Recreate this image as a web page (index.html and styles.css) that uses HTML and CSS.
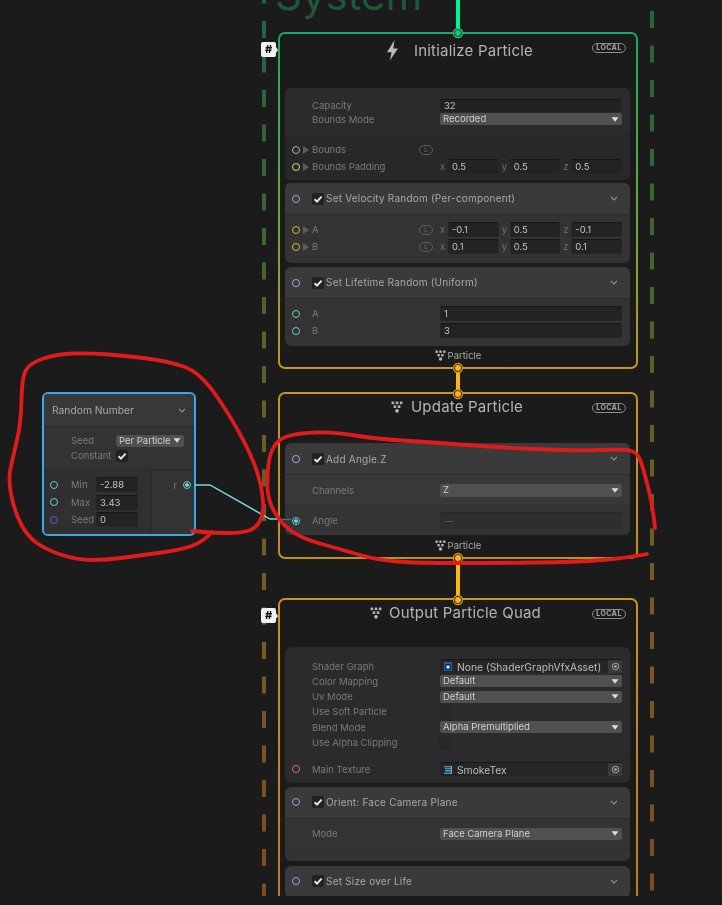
FILE: index.html
```html
<!DOCTYPE html>
<html lang="en">
<head>
<meta charset="utf-8">
<title>VFX Graph</title>
<link rel="stylesheet" href="styles.css">
</head>
<body>
<svg class="defs" width="0" height="0" aria-hidden="true">
  <symbol id="dots" viewBox="0 0 11 11">
    <rect x="0.5" y="0.5" width="2.4" height="2.4"/><rect x="4.3" y="0.5" width="2.4" height="2.4"/><rect x="8.1" y="0.5" width="2.4" height="2.4"/>
    <rect x="2.4" y="4" width="2.4" height="2.4"/><rect x="6.2" y="4" width="2.4" height="2.4"/>
    <circle cx="5.5" cy="9" r="1.7"/>
  </symbol>
  <symbol id="check" viewBox="0 0 12 12"><path d="M2.6 6.3 5 8.6 9.6 3.6" fill="none" stroke="#e6e6e6" stroke-width="2"/></symbol>
  <symbol id="chev" viewBox="0 0 8 5"><path d="M1 1 4 4 7 1" fill="none" stroke="#8e8e8e" stroke-width="1.1"/></symbol>
  <symbol id="tri" viewBox="0 0 8 5"><path d="M0.5 0.3H7.5L4 4.7Z" fill="#dcdcdc"/></symbol>
  <symbol id="target" viewBox="0 0 10 10"><circle cx="5" cy="5" r="3.6" fill="none" stroke="#b0b0b0" stroke-width="1"/><circle cx="5" cy="5" r="1.5" fill="#b0b0b0"/></symbol>
</svg>

<main class="canvas">
  <svg class="layer" width="722" height="896" aria-hidden="true">
    <defs>
      <linearGradient id="dashL" gradientUnits="userSpaceOnUse" x1="0" y1="0" x2="0" y2="896">
        <stop offset="0" stop-color="#23633e"/><stop offset=".3" stop-color="#43652f"/><stop offset=".45" stop-color="#625f27"/><stop offset=".7" stop-color="#785a22"/><stop offset="1" stop-color="#7a4c20"/>
      </linearGradient>
    </defs>
    <line class="dash" x1="264" y1="-13.5" x2="264" y2="896"/>
    <line class="dash" x1="652" y1="-23.5" x2="652" y2="896"/>
  </svg>

  <div class="system">System</div>

  <section class="block block-init">
    <span class="tag">#</span>
    <header class="title title-init">
      <svg class="bolt" viewBox="0 0 13 21" width="13" height="21"><path d="M8.5 0 1 12.2H5.6L3.8 20.6 12 8.4H7.3Z" fill="#b9b9b9"/></svg>
      <h2>Initialize Particle</h2>
      <span class="local">LOCAL</span>
    </header>
    <div class="panel">
      <div class="sect sect-top">
        <div class="row row-tight"><span class="slot"></span><span class="lbl">Capacity</span><span class="field field-cap">32</span></div>
        <div class="row row-tight"><span class="slot"></span><span class="lbl">Bounds Mode</span><span class="drop">Recorded<svg class="tri"><use href="#tri"/></svg></span></div>
      </div>
      <div class="sect sect-ports">
        <div class="row"><span class="slot"><i class="port p-grey"></i><i class="fold"></i></span><span class="lbl">Bounds<em class="lock">L</em></span><span></span></div>
        <div class="row"><span class="slot"><i class="port p-lime"></i><i class="fold"></i></span><span class="lbl">Bounds Padding</span>
          <span class="vec"><span class="axis">x<b class="field">0.5</b></span><span class="axis">y<b class="field">0.5</b></span><span class="axis">z<b class="field">0.5</b></span></span></div>
      </div>
    </div>
    <div class="panel block-item gap3">
      <div class="head"><i class="port p-purple"></i><span class="check"><svg><use href="#check"/></svg></span><span class="name">Set Velocity Random (Per-component)</span><svg class="chev"><use href="#chev"/></svg></div>
      <div class="sect body">
        <div class="row"><span class="slot"><i class="port p-gold"></i><i class="fold"></i></span><span class="lbl">A<em class="lock">L</em></span>
          <span class="vec"><span class="axis">x<b class="field">-0.1</b></span><span class="axis">y<b class="field">0.5</b></span><span class="axis">z<b class="field">-0.1</b></span></span></div>
        <div class="row"><span class="slot"><i class="port p-gold"></i><i class="fold"></i></span><span class="lbl">B<em class="lock">L</em></span>
          <span class="vec"><span class="axis">x<b class="field">0.1</b></span><span class="axis">y<b class="field">0.5</b></span><span class="axis">z<b class="field">0.1</b></span></span></div>
      </div>
    </div>
    <div class="panel block-item gap4">
      <div class="head"><i class="port p-purple"></i><span class="check"><svg><use href="#check"/></svg></span><span class="name">Set Lifetime Random (Uniform)</span><svg class="chev"><use href="#chev"/></svg></div>
      <div class="sect body body-life">
        <div class="row"><span class="slot"><i class="port p-cyan"></i></span><span class="lbl">A</span><span class="field">1</span></div>
        <div class="row"><span class="slot"><i class="port p-cyan"></i></span><span class="lbl">B</span><span class="field">3</span></div>
      </div>
    </div>
    <footer class="foot"><svg class="dots"><use href="#dots"/></svg>Particle</footer>
  </section>

  <section class="block block-update">
    <header class="title title-update">
      <svg class="dots-lg"><use href="#dots"/></svg>
      <h2>Update Particle</h2>
      <span class="local">LOCAL</span>
    </header>
    <div class="panel block-item">
      <div class="head"><i class="port p-purple"></i><span class="check"><svg><use href="#check"/></svg></span><span class="name">Add Angle.Z</span><svg class="chev"><use href="#chev"/></svg></div>
      <div class="row row-channels"><span class="slot"></span><span class="lbl">Channels</span><span class="drop drop-lg">Z<svg class="tri"><use href="#tri"/></svg></span></div>
      <div class="row row-angle"><span class="slot"><i class="port p-cyan on"></i></span><span class="lbl">Angle</span><span class="field field-off">—</span></div>
    </div>
    <footer class="foot foot-update"><svg class="dots"><use href="#dots"/></svg>Particle</footer>
  </section>

  <section class="block block-output">
    <span class="tag">#</span>
    <header class="title title-output">
      <svg class="dots-lg"><use href="#dots"/></svg>
      <h2>Output Particle Quad</h2>
      <span class="local">LOCAL</span>
    </header>
    <div class="panel">
      <div class="sect sect-settings">
        <div class="row row-set"><span class="slot"></span><span class="lbl">Shader Graph</span>
          <span class="obj"><svg class="obj-ico" width="8" height="9" viewBox="0 0 8 9"><rect width="8" height="9" fill="#1f63b0"/><rect x="1" y="2" width="6" height="6" fill="#16304f"/><rect x="2.500" y="3.500" width="3" height="3" fill="#dfe9f5"/></svg><span class="obj-name">None (ShaderGraphVfxAsset)</span><span class="obj-btn"><svg><use href="#target"/></svg></span></span></div>
        <div class="row row-set"><span class="slot"></span><span class="lbl">Color Mapping</span><span class="drop">Default<svg class="tri"><use href="#tri"/></svg></span></div>
        <div class="row row-set"><span class="slot"></span><span class="lbl">Uv Mode</span><span class="drop">Default<svg class="tri"><use href="#tri"/></svg></span></div>
        <div class="row row-set"><span class="slot"></span><span class="lbl">Use Soft Particle</span><span class="check check-off"></span></div>
        <div class="row row-set"><span class="slot"></span><span class="lbl">Blend Mode</span><span class="drop">Alpha Premultiplied<svg class="tri"><use href="#tri"/></svg></span></div>
        <div class="row row-set"><span class="slot"></span><span class="lbl">Use Alpha Clipping</span><span class="check check-off"></span></div>
      </div>
      <div class="row row-tex"><span class="slot"><i class="port p-red"></i></span><span class="lbl">Main Texture</span>
        <span class="obj"><svg class="obj-ico" width="8" height="8" viewBox="0 0 8 8"><path d="M0 .7H7.500M1 2.800H7.500M1 4.900H7.500M0 7.200H7.500" stroke="#5fb6e6" stroke-width="1.100" fill="none"/><path d="M7.500 0V8" stroke="#5fb6e6"/></svg><span class="obj-name">SmokeTex</span><span class="obj-btn"><svg><use href="#target"/></svg></span></span></div>
    </div>
    <div class="panel block-item gap4">
      <div class="head"><i class="port p-purple"></i><span class="check"><svg><use href="#check"/></svg></span><span class="name">Orient: Face Camera Plane</span><svg class="chev"><use href="#chev"/></svg></div>
      <div class="row row-mode"><span class="slot"></span><span class="lbl">Mode</span><span class="drop">Face Camera Plane<svg class="tri"><use href="#tri"/></svg></span></div>
      <div class="empty"></div>
    </div>
    <div class="panel block-item gap5">
      <div class="head"><i class="port p-purple"></i><span class="check"><svg><use href="#check"/></svg></span><span class="name">Set Size over Life</span><svg class="chev"><use href="#chev"/></svg></div>
    </div>
  </section>

  <section class="op">
    <header class="op-head"><span>Random Number</span><svg class="chev"><use href="#chev"/></svg></header>
    <div class="op-settings">
      <div class="op-set"><span class="lbl">Seed</span><span class="drop drop-sm">Per Particle<svg class="tri"><use href="#tri"/></svg></span></div>
      <div class="op-set"><span class="lbl">Constant</span><span class="check"><svg><use href="#check"/></svg></span></div>
    </div>
    <div class="op-ports">
      <div class="op-in">
        <div class="op-row"><i class="port p-cyan"></i><span class="lbl">Min</span><span class="field">-2.88</span></div>
        <div class="op-row"><i class="port p-cyan"></i><span class="lbl">Max</span><span class="field">3.43</span></div>
        <div class="op-row"><i class="port p-indigo"></i><span class="lbl">Seed</span><span class="field">0</span></div>
      </div>
      <div class="op-out"><span class="lbl">r</span><i class="port p-cyan on"></i></div>
    </div>
  </section>

  <svg class="layer" width="722" height="896" aria-hidden="true">
    <path class="wire" d="M195 485H210L270 519H278"/>
    <path class="wire wire-dim" d="M278 519.500H291"/>
    <line class="flow flow-green" x1="458" y1="-2" x2="458" y2="33"/>
    <line class="flow flow-amber" x1="458" y1="368" x2="458" y2="395"/>
    <line class="flow flow-amber" x1="458" y1="558" x2="458" y2="600"/>
    <circle class="ring ring-green" cx="458" cy="33" r="4.5"/><circle class="pip pip-green" cx="458" cy="33" r="3"/>
    <circle class="ring ring-amber" cx="458" cy="368" r="4.5"/><circle class="pip pip-amber" cx="458" cy="368" r="3"/>
    <circle class="ring ring-amber" cx="458" cy="394" r="4.5"/><circle class="pip pip-amber" cx="458" cy="394" r="3"/>
    <circle class="ring ring-amber" cx="458" cy="558" r="4.5"/><circle class="pip pip-amber" cx="458" cy="558" r="3"/>
    <circle class="ring ring-amber" cx="458" cy="600" r="4.5"/><circle class="pip pip-amber" cx="458" cy="600" r="3"/>
    <path class="ink" d="M192 531Q213 533 228 533Q243 533 250.5 530Q258 527 261.5 517Q265 507 261 487Q257 467 245 443.5Q233 420 216.500 396Q200 372 183.500 366.500Q167 361 147 358.500Q127 356 108.500 354.500Q90 353 73.500 353.500Q57 354 43.500 358.500Q30 363 26 370Q22 377 21.500 400Q21 423 17 440Q13 457 10.500 468.500Q8 480 11.500 496.500Q15 513 21.500 525Q28 537 37.500 543.500Q47 550 62 555Q77 560 92 560Q107 560 125 557.500Q143 555 161.500 552.500Q180 550 191.500 546Q203 542 212 532"/>
    <path class="ink" d="M655 528Q653 507 648 487Q643 467 640 459.500Q637 452 630 450.500Q623 449 600 450Q577 451 535 449Q493 447 460 444.500Q427 442 402 440.500Q377 439 355 435.500Q333 432 316.500 432.500Q300 433 290 435.500Q280 438 275 445Q270 452 268.500 464.500Q267 477 267.500 488.500Q268 500 274 511Q280 522 290 530Q300 538 321.500 544Q343 550 360 555Q377 560 397 561.500Q417 563 455 563Q493 563 535 562.500Q577 562 602 560Q627 558 647 554"/>
  </svg>
</main>
</body>
</html>
```

FILE: styles.css
```css
* { box-sizing: border-box; }
html, body { margin: 0; padding: 0; }
body {
  width: 722px;
  height: 905px;
  background: #191919;
  overflow: hidden;
  font-family: Inter, "Noto Sans", sans-serif;
  font-size: 9.5px;
  color: #7a7a7a;
}
.defs { position: absolute; }
.canvas {
  position: relative;
  width: 722px;
  height: 896px;
  background: #1b1b1b;
  overflow: hidden;
  filter: blur(0.3px);
}
.layer { position: absolute; left: 0; top: 0; pointer-events: none; }
.dash { stroke: url(#dashL); stroke-width: 4; stroke-dasharray: 17 17.5; }
.wire { fill: none; stroke: #7cdcdc; stroke-width: 1.4; }
.wire-dim { stroke: #5a6a6a; }
.flow { stroke-width: 4; }
.flow-green { stroke: #00f58c; }
.flow-amber { stroke: #ffb414; }
.ring { fill: #1b1b1b; stroke-width: 1.3; }
.ring-green { stroke: #1fd585; }
.ring-amber { stroke: #d99a1a; }
.pip-green { fill: #10c877; }
.pip-amber { fill: #ffb414; }
.ink { fill: none; stroke: #e01b1b; stroke-width: 3.8; stroke-linecap: round; stroke-linejoin: round; }

.system {
  position: absolute;
  left: 275px;
  top: -32px;
  font-size: 42px;
  line-height: 54px;
  color: #1e573a;
}

/* context blocks */
.block {
  position: absolute;
  left: 278px;
  width: 360px;
  padding: 0 6px 0 5px;
  border: 2px solid transparent;
  border-radius: 7px;
}
.block-init {
  top: 32px;
  height: 337px;
  background: linear-gradient(#1b1b1b, #1b1b1b) padding-box, linear-gradient(#17a964, #6da53c 55%, #c5951f) border-box;
}
.block-update {
  top: 392px;
  height: 167px;
  background: linear-gradient(#1b1b1b, #1b1b1b) padding-box, linear-gradient(#c5951f, #bd901f) border-box;
}
.block-output {
  top: 598px;
  height: 340px;
  background: linear-gradient(#1b1b1b, #1b1b1b) padding-box, linear-gradient(#c5951f, #bb7628) border-box;
}
.tag {
  position: absolute;
  left: -19px;
  top: 8px;
  width: 15px;
  height: 15px;
  border-radius: 2px;
  background: #f2f2f2;
  color: #111;
  font-size: 11px;
  font-weight: 800;
  line-height: 15px;
  text-align: center;
}
.tag::after {
  content: "";
  position: absolute;
  right: -2px;
  top: 5px;
  border-style: solid;
  border-width: 3px 0 3px 2px;
  border-color: transparent transparent transparent #f2f2f2;
}
.title {
  position: relative;
  display: flex;
  align-items: center;
  color: #b4b4b4;
}
.title h2 { margin: 0; font-size: 15px; font-weight: 400; letter-spacing: 0.2px; line-height: 20px; }
.title-init h2 { margin-top: 1px; }
.title-init { height: 32px; margin-bottom: 22px; padding-left: 101px; }
.title-update { height: 26px; margin-bottom: 23px; padding-left: 106px; }
.title-output { height: 26px; margin-bottom: 21px; padding-left: 85px; }
.bolt { margin-right: 15px; }
.dots-lg { width: 12px; height: 12px; margin-right: 8px; fill: #b4b4b4; }
.title-output .dots-lg { margin-right: 7px; }
.local {
  position: absolute;
  right: 4px;
  top: 50%;
  width: 34px;
  height: 10px;
  margin-top: -7.5px;
  border: 1px solid #8a8a8a;
  border-radius: 5px;
  color: #9a9a9a;
  font-size: 7px;
  font-weight: 800;
  letter-spacing: 0.4px;
  line-height: 8px;
  text-align: center;
}
.title-update .local,
.title-output .local { margin-top: -4.5px; }

.panel { background: #2b2b2b; border-radius: 6px; overflow: hidden; }
.block-item { background: #333; }
.gap3 { margin-top: 3px; }
.gap4 { margin-top: 4px; }
.gap5 { margin-top: 5px; }
.sect-top { padding: 10px 0; border-bottom: 1px solid #262626; }
.sect-ports { padding: 5px 0 5px; background: #282828; }
.sect-settings { padding: 11.4px 0 4.6px; border-bottom: 1px solid #272727; }

.row {
  display: grid;
  grid-template-columns: 27px 128px 182px;
  align-items: center;
  height: 17px;
}
.row-tight:first-child { height: 15px; }
.row-tight { height: 12px; }
.row-set { height: 15.3px; }
.row-tex { height: 27px; }
.row-channels { height: 31px; background: #383838; border-bottom: 1px solid #2b2b2b; }
.row-angle { height: 29px; background: #343434; }
.row-mode { height: 31px; border-bottom: 1px solid #2b2b2b; }
.empty { height: 11px; }
.slot { display: flex; align-items: center; padding-left: 7px; }
.lbl { display: flex; align-items: center; white-space: nowrap; }
.lock {
  margin-left: auto;
  margin-right: 7px;
  width: 14px;
  height: 10px;
  border: 1px solid #5e5e5e;
  border-radius: 5px;
  color: #6e6e6e;
  font-size: 6px;
  font-style: normal;
  line-height: 8px;
  text-align: center;
}
.port {
  display: block;
  flex: none;
  width: 8px;
  height: 8px;
  border: 1.4px solid #aaa;
  border-radius: 50%;
}
.port.on { background: radial-gradient(circle, currentColor 0 40%, transparent 45%); }
.p-grey { border-color: #b0b0b0; }
.p-lime { border-color: #dcdc70; }
.p-gold { border-color: #dfb23a; }
.p-purple { border-color: #b795e0; }
.p-cyan { border-color: #6ccccc; color: #6ccccc; }
.p-red { border-color: #d87070; }
.p-indigo { border-color: #6a50d2; }
.fold {
  display: block;
  width: 0;
  height: 0;
  margin-left: 3px;
  border-style: solid;
  border-width: 4px 0 4px 6px;
  border-color: transparent transparent transparent #5e5e5e;
}
.field {
  display: block;
  height: 15px;
  padding: 0 3px;
  background: #232323;
  border: 1px solid #262626;
  border-top-color: #161616;
  border-radius: 2px;
  color: #c4c4c4;
  font-weight: 400;
  line-height: 14px;
}
.field-cap { height: 13px; line-height: 12px; background: #212121; }
.field-off { height: 17px; background: #2e2e2e; border-color: #2e2e2e; border-top-color: #262626; color: #5c5c5c; line-height: 15px; }
.vec { display: grid; grid-template-columns: repeat(3, 1fr); column-gap: 3px; }
.axis { display: grid; grid-template-columns: 8px 1fr; align-items: center; color: #6e6e6e; }
.drop {
  display: flex;
  align-items: center;
  justify-content: space-between;
  height: 12px;
  padding: 0 3px;
  background: #505050;
  border-radius: 2px;
  color: #cfcfcf;
  line-height: 12px;
}
.drop-lg { height: 13px; }
.drop-sm { width: 68px; height: 12px; gap: 2px; }
.tri { width: 8px; height: 5px; flex: none; }
.check {
  display: block;
  flex: none;
  width: 12px;
  height: 12px;
  background: #222;
  border-radius: 2px;
}
.check svg { display: block; width: 12px; height: 12px; }
.row > .check-off { margin-left: -1px; background: #292929; border: 1px solid #242424; }
.obj {
  display: flex;
  align-items: center;
  height: 14px;
  padding-left: 4px;
  background: #252525;
  border-top: 1px solid #171717;
  border-radius: 2px;
  color: #bdbdbd;
}
.obj-ico { flex: none; margin-right: 5px; }
.obj-name { flex: 1; font-size: 10.3px; white-space: nowrap; }
.obj-btn { display: flex; align-items: center; justify-content: center; width: 14px; height: 13px; background: #3a3a3a; }
.obj-btn svg { width: 9px; height: 9px; }

.head {
  display: flex;
  align-items: center;
  height: 32px;
  padding: 0 12px 0 7px;
  background: #3a3a3a;
  border-bottom: 1px solid #2c2c2c;
}
.head .check { margin-left: 12px; margin-right: 2px; }
.name { flex: 1; color: #a8a8a8; font-size: 10px; letter-spacing: 0.22px; white-space: nowrap; }
.block-init .name { padding-bottom: 1px; }
.chev { width: 8px; height: 5px; flex: none; }
.body { padding: 6px 0 8px; }
.body-life { padding-bottom: 7px; }
.body .row { height: 17px; }
.foot {
  display: flex;
  align-items: center;
  justify-content: center;
  gap: 2px;
  height: 19px;
  margin-right: -1px;
  color: #a8a8a8;
}
.foot-update { height: 20px; }
.dots { width: 11px; height: 11px; fill: #b4b4b4; }

/* operator node */
.op {
  position: absolute;
  left: 42px;
  top: 392px;
  width: 154px;
  height: 144px;
  display: flex;
  flex-direction: column;
  background: #333;
  border: 2px solid #3aa9ea;
  border-radius: 6px;
  overflow: hidden;
}
.op-head {
  display: flex;
  align-items: center;
  justify-content: space-between;
  height: 33px;
  flex: none;
  padding: 0 8px;
  background: #383838;
  border-bottom: 1px solid #2a2a2a;
  color: #a8a8a8;
  font-size: 10.3px;
}
.op-settings { flex: none; height: 43px; padding: 6px 0 0 27px; border-bottom: 1px solid #2a2a2a; }
.op-set { display: grid; grid-template-columns: 45px auto; align-items: center; height: 15px; }
.op-ports { flex: 1; display: flex; }
.op-in { width: 108px; padding-top: 6px; background: #303030; border-right: 1px solid #2a2a2a; }
.op-row { display: grid; grid-template-columns: 27px 25px 42px; align-items: center; height: 17.5px; }
.op-row .port { margin-left: 6px; }
.op-out { flex: 1; display: flex; justify-content: flex-end; align-items: center; gap: 6px; height: 18px; margin-top: 6px; padding-right: 3px; }
```
